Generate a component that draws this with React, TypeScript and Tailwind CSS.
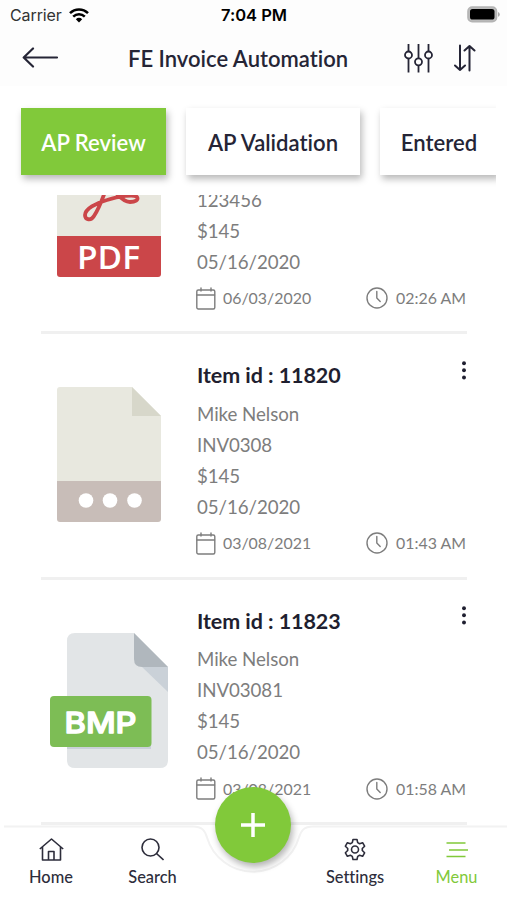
import React from 'react';

interface Invoice {
  id?: string;
  lines: string[];
  date: string;
  time: string;
  file: 'pdf' | 'other' | 'bmp';
}

const tabs = [
  { label: 'AP Review', width: 'w-[145px]', active: true },
  { label: 'AP Validation', width: 'w-[174px]', active: false },
  { label: 'Entered', width: 'w-[118px]', active: false },
];

const invoices: Invoice[] = [
  { lines: ['123456', '$145', '05/16/2020'], date: '06/03/2020', time: '02:26 AM', file: 'pdf' },
  { id: '11820', lines: ['Mike Nelson', 'INV0308', '$145', '05/16/2020'], date: '03/08/2021', time: '01:43 AM', file: 'other' },
  { id: '11823', lines: ['Mike Nelson', 'INV03081', '$145', '05/16/2020'], date: '03/08/2021', time: '01:58 AM', file: 'bmp' },
];

const StatusBar = () => (
  <div className="flex h-[30px] items-center justify-between pl-[10px] pr-[7px] font-['Inter',sans-serif] text-black">
    <div className="flex w-[150px] items-center gap-[7px]">
      <span className="text-[16px] tracking-[-0.1px] text-[#333]">Carrier</span>
      <svg width="20" height="15" viewBox="0 0 20 15" fill="none" stroke="#000" strokeWidth="2.5">
        <path d="M1 5.2C6 .2 14 .2 19 5.2" />
        <path d="M4.2 8.7c3.3-3.3 8.3-3.3 11.6 0" />
        <path d="M6.8 11.2c1.9-1.8 4.5-1.8 6.4 0L10 14.4z" fill="#000" stroke="none" />
      </svg>
    </div>
    <span className="-ml-[2px] text-[16.5px] font-semibold">7:04 PM</span>
    <div className="flex w-[150px] justify-end pb-px">
      <svg width="33" height="17" viewBox="0 0 33 17">
        <rect x="1" y="1" width="28.5" height="14.6" rx="4.2" fill="#bbb" stroke="#b4b4b4" strokeWidth="1.6" />
        <rect x="3" y="3" width="24.5" height="10.6" rx="2.6" fill="#000" />
        <path d="M31 6v4.8q1.8-.7 1.8-2.4T31 6z" fill="#aaa" />
      </svg>
    </div>
  </div>
);

const Header = () => (
  <header className="flex h-[56px] items-center text-[#252536]">
    <svg className="ml-[22px]" width="37" height="22" viewBox="0 0 37 22" fill="none" stroke="currentColor" strokeWidth="2.2" strokeLinecap="round" strokeLinejoin="round">
      <path d="M35 10.5H2M11 1.5l-9.3 9 9.3 9" />
    </svg>
    <h1 className="ml-[69px] w-[276px] whitespace-nowrap text-[22px] font-semibold">FE Invoice Automation</h1>
    <svg width="29" height="30" viewBox="0 0 29 30" fill="none" stroke="currentColor" strokeWidth="1.8">
      <path d="M4.5 1v7.5M4.5 15.5v14M14.5 1v14.5M14.5 22v7.5M24.5 1v7.5M24.5 15.5v14" />
      <circle cx="4.5" cy="12" r="3.5" />
      <circle cx="14.5" cy="18.8" r="3.5" />
      <circle cx="24.5" cy="12" r="3.5" />
    </svg>
    <svg className="ml-[21px]" width="22" height="28" viewBox="0 0 22 28" fill="none" stroke="currentColor" strokeWidth="2" strokeLinecap="round" strokeLinejoin="round">
      <path d="M6 1.5V26M1 21.5L6 26l5-4.5M15.500 26.500V2M10.500 6.500l5-4.500 5 4.500" />
    </svg>
  </header>
);

const Tabs = () => (
  <div className="ml-[9px] mr-[11px] flex h-[109px] gap-[20px] overflow-hidden pl-3 pt-[21.5px]">
    {tabs.map((tab) => (
      <div
        key={tab.label}
        className={`${tab.width} flex h-[67.5px] shrink-0 items-center justify-center whitespace-nowrap pt-[2px] text-[22.1px] font-semibold shadow-[2px_4px_7px_rgba(0,0,0,0.28)] ${
          tab.active ? 'bg-[#81c93a] text-white' : 'bg-white text-[#252536]'
        }`}
      >
        {tab.label}
      </div>
    ))}
  </div>
);

const FileIcon = ({ type }: { type: Invoice['file'] }) => {
  if (type === 'bmp') {
    return (
      <svg width="120" height="136" viewBox="0 0 120 136">
        <path d="M25 0h59l34 34v93q0 8-8 8H25q-8 0-8-8V8q0-8 8-8z" fill="#e2e5e7" />
        <path d="M84 0l34 34H92q-8 0-8-8z" fill="#b0b7bd" />
        <path d="M92 34h26v25z" fill="#cad1d8" />
        <path d="M17 113.5h81l3-3V116H17z" fill="#cad1d8" />
        <rect y="63" width="101.5" height="51" rx="4" fill="#7dbd55" />
        <text x="14.5" y="99.5" fontFamily="Inter, sans-serif" fontWeight="500" fontSize="29" fill="#fff" stroke="#fff" strokeWidth="1.3" strokeLinejoin="round" textLength="72" lengthAdjust="spacingAndGlyphs">BMP</text>
      </svg>
    );
  }
  return (
    <svg className="ml-[7px]" width="104" height="136" viewBox="0 0 104 136">
      <path d="M3 0h72l29 29v66H0V3q0-3 3-3z" fill="#e8e8df" />
      <path d="M75 0l29 29H75z" fill="#d7d7ca" />
      <path d="M0 94h104v38q0 3-3 3H3q-3 0-3-3z" fill={type === 'pdf' ? '#cb4649' : '#c8bdb8'} />
      {type === 'pdf' ? (
        <>
          <path d="M52 25c-7 0-4 12 4 22 6 8 11 13 17 13 5 0 9-2 7-5-3-3-18-1-30 3-11 3-22 9-22 15 0 5 6 6 9 1 4-6 9-18 13-30 4-10 6-19 2-19z" fill="none" stroke="#cb4649" strokeWidth="3.8" />
          <text x="20" y="127" fontFamily="Open Sans, sans-serif" fontWeight="600" fontSize="33" fill="#fff" textLength="63" lengthAdjust="spacingAndGlyphs">PDF</text>
        </>
      ) : (
        <g fill="#fff">
          <circle cx="29" cy="113.5" r="7.3" />
          <circle cx="53" cy="113.5" r="7.3" />
          <circle cx="77.5" cy="113.5" r="7.3" />
        </g>
      )}
    </svg>
  );
};

const InvoiceCard = ({ invoice }: { invoice: Invoice }) => (
  <div className="ml-[41px] mr-[40px] flex h-[245.3px] shrink-0 border-b-[3px] border-[#f0f0f0]">
    <div className="w-[156px] pl-[8.5px] pt-[53px]">
      <FileIcon type={invoice.file} />
    </div>
    <div className="flex flex-1 flex-col justify-end pb-[21.3px]">
      {invoice.id && (
        <div className="mb-[10.5px] flex h-[26px] items-center justify-between">
          <h2 className="text-[21.5px] font-bold tracking-[-0.07px] text-[#1f1f30]">Item id : {invoice.id}</h2>
          <svg className="-mt-[10px] mr-[1px]" width="4" height="20" viewBox="0 0 4 20" fill="#1f1f30">
            <circle cx="2" cy="2.2" r="1.95" />
            <circle cx="2" cy="9.3" r="1.95" />
            <circle cx="2" cy="16.5" r="1.95" />
          </svg>
        </div>
      )}
      {invoice.lines.map((line) => (
        <p key={line} className="text-[18.7px] leading-[31px] tracking-[-0.05px] text-[#7d7d7d]">{line}</p>
      ))}
      <div className="mt-[8.3px] flex h-[24px] items-center pr-px text-[15.9px] text-[#7d7d7d]">
        <svg className="-ml-px" width="20" height="23" viewBox="0 0 20 23" fill="none" stroke="currentColor" strokeWidth="1.4" strokeLinecap="round">
          <rect x=".8" y="3" width="18" height="19" rx="1.5" />
          <path d="M1 8h17.5M5 1v3M15 1v3" />
        </svg>
        <span className="ml-[7px]">{invoice.date}</span>
        <div className="ml-auto flex items-center">
          <svg width="22" height="22" viewBox="0 0 22 22" fill="none" stroke="currentColor" strokeWidth="1.4" strokeLinecap="round">
            <circle cx="11" cy="11" r="10" />
            <path d="M10.8 4.500V11l3.4 3.500" />
          </svg>
          <span className="ml-2">{invoice.time}</span>
        </div>
      </div>
    </div>
  </div>
);

const iconProps = { fill: 'none', stroke: 'currentColor', strokeWidth: 1.6, strokeLinejoin: 'round' as const };

const NavBar = () => (
  <nav className="relative flex h-[75px] text-[#2d2d3b]">
    <svg className="absolute left-0 top-0" width="507" height="75" viewBox="0 0 507 75">
      <path d="M0 1.5h193c9 0 12 4 14 11a48 48 0 0 0 92 0c2-7 5-11 14-11h194v74H0z" fill="#fff" />
      <path d="M4 1.5h189c9 0 12 4 14 11a48 48 0 0 0 92 0c2-7 5-11 14-11h194" fill="none" stroke="#f2f2f2" strokeWidth="2" />
    </svg>
    <div className="relative flex flex-1 items-center pl-[0.5px] pt-[1px] text-[16.4px] font-medium leading-[22px]">
      <div className="flex w-[101px] flex-col items-center gap-[5px]">
        <svg width="25" height="23" viewBox="0 0 25 23" {...iconProps}>
          <path d="M.8 11L12.5 1l11.7 10M3.5 9v13h18V9M9.500 22v-8.500h5.500V22" />
        </svg>
        <span>Home</span>
      </div>
      <div className="flex w-[102px] flex-col items-center gap-[5px]">
        <svg width="23" height="23" viewBox="0 0 23 23" {...iconProps}>
          <circle cx="9.5" cy="9.5" r="8.5" />
          <path d="M15.5 15.5l7 6.5" />
        </svg>
        <span>Search</span>
      </div>
      <div className="ml-[101px] flex w-[101px] flex-col items-center gap-[5px]">
        <svg width="22" height="23" viewBox="0 0 22 22" {...iconProps}>
          <path d="M9 1h4l.7 3.1 1.9 1.1 3-1 2 3.5L18.3 10v2l2.300 2.300-2 3.500-3-1-1.900 1.100L13 21H9l-.7-3.100-1.900-1.100-3 1-2-3.500L3.700 12v-2L1.400 7.700l2-3.500 3 1 1.900-1.100z" />
          <circle cx="11" cy="11" r="3.5" />
        </svg>
        <span>Settings</span>
      </div>
      <div className="flex w-[102px] flex-col items-center gap-[5px] font-normal text-[#81c93a]">
        <svg width="22" height="23" viewBox="0 0 22 23" fill="none" stroke="currentColor" strokeWidth="1.7">
          <path d="M.5 5h19M3 12h19M.5 18.5h19" />
        </svg>
        <span>Menu</span>
      </div>
    </div>
    <button className="absolute -top-[38px] left-[215px] flex h-[76px] w-[76px] items-center justify-center rounded-full bg-[#81c93a] shadow-[2px_4px_7px_rgba(0,0,0,0.3)]" aria-label="Add">
      <svg width="24" height="24" viewBox="0 0 24 24" fill="none" stroke="#fff" strokeWidth="3.5">
        <path d="M12 0v24M0 12h24" />
      </svg>
    </button>
  </nav>
);

export default function App() {
  return (
    <div className="flex h-[900px] w-[507px] flex-col overflow-hidden bg-white font-['Lato',sans-serif] [font-variant-ligatures:none]">
      <div className="bg-[#fdfdfd]">
        <StatusBar />
        <Header />
      </div>
      <Tabs />
      <main className="flex h-[630px] flex-col justify-end overflow-hidden">
        {invoices.map((invoice) => (
          <InvoiceCard key={invoice.time} invoice={invoice} />
        ))}
      </main>
      <NavBar />
    </div>
  );
}
